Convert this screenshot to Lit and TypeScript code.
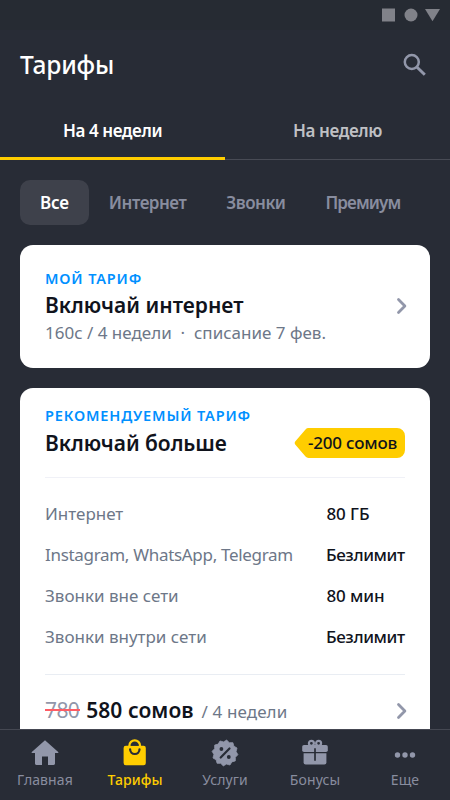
import { LitElement, html, css, svg } from "lit";
import { customElement, state } from "lit/decorators.js";
import { classMap } from "lit/directives/class-map.js";

const chevron = html`<svg class="chev" width="12" height="18" viewBox="0 0 12 18"><path d="M2.5 2.6L8.9 9l-6.4 6.4" fill="none" stroke="#9297aa" stroke-width="2.8" stroke-linecap="round" stroke-linejoin="round"/></svg>`;

const seal = Array.from({ length: 24 }, (_, i) => {
  const a = ((i - 0.5) * Math.PI) / 12;
  const r = i % 2 ? 13 : 11.2;
  return `${(14 + r * Math.sin(a)).toFixed(2)},${(14 - r * Math.cos(a)).toFixed(2)}`;
}).join(" ");

const icons: Record<string, unknown> = {
  home: svg`<path d="M14 1.2L27.2 13c.5.5.3 1-.4 1H24v10.6c0 .9-.5 1.4-1.4 1.4H17v-8.6h-6V26H5.4c-.9 0-1.4-.5-1.4-1.4V14H1.2c-.7 0-.9-.5-.4-1z" fill="currentColor"/>`,
  bag: svg`<path d="M8.4 8V6.6a5.3 5.3 0 0 1 10.6 0V8" fill="none" stroke="currentColor" stroke-width="2.2"/><rect x="2.6" y="6.7" width="22.2" height="19.5" rx="2.2" fill="currentColor"/><path d="M9.8 6.8a4 4 0 0 1 7.8 0z" fill="#282c36"/><path d="M9.1 10.3a4.7 4.7 0 0 0 9.4 0" fill="none" stroke="#282c36" stroke-width="2.2" stroke-linecap="round"/>`,
  percent: svg`<polygon points=${seal} fill="currentColor" stroke="currentColor" stroke-width=".8" stroke-linejoin="round"/><path d="M9.7 18.5l8.8-9" stroke="#282c36" stroke-width="2.2" stroke-linecap="round"/><circle cx="10.4" cy="10" r="1.9" fill="#282c36"/><circle cx="17.8" cy="18" r="1.9" fill="#282c36"/>`,
  gift: svg`<g fill="none" stroke="currentColor" stroke-width="2.2"><circle cx="10.4" cy="4.3" r="2.5"/><circle cx="17.6" cy="4.3" r="2.5"/></g><rect x="1.2" y="6" width="25.6" height="7" rx="1.8" fill="currentColor"/><path d="M2.6 14.3h22.8v9.2a2 2 0 0 1-2 2H4.6a2 2 0 0 1-2-2z" fill="currentColor"/><path d="M14 9.2v12.6" stroke="#282c36" stroke-width="1.7"/>`,
  more: svg`<g fill="currentColor"><circle cx="6.5" cy="16" r="2.7"/><circle cx="14" cy="16" r="2.7"/><circle cx="21.5" cy="16" r="2.7"/></g>`,
};

@customElement("app-root")
export class AppRoot extends LitElement {
  @state() private tab = 0;
  @state() private filter = 0;

  private filters = [
    ["Все", ""],
    ["Интернет", ""],
    ["Звонки", ""],
    ["Премиум", "tight"],
  ];
  private rows = [
    ["Интернет", "80 ГБ", "", "loose"],
    ["Instagram, WhatsApp, Telegram", "Безлимит", "long", ""],
    ["Звонки вне сети", "80 мин", "", "loose"],
    ["Звонки внутри сети", "Безлимит", "", ""],
  ];
  private nav = [
    ["home", "Главная"],
    ["bag", "Тарифы"],
    ["percent", "Услуги"],
    ["gift", "Бонусы"],
    ["more", "Еще"],
  ];

  static styles = css`
    :host { display: flex; flex-direction: column; height: 800px; overflow: hidden; background: #282c36; color: #10131c; font-family: "Noto Sans", "Open Sans", sans-serif; font-size: 17px; line-height: 24px; }
    * { box-sizing: border-box; }
    svg { display: block; flex: none; }
    .status { flex: none; height: 30px; background: #262b33; display: flex; justify-content: flex-end; align-items: center; padding-right: 10px; }
    .header { flex: none; height: 71px; display: flex; justify-content: space-between; align-items: center; padding: 0 23px 2px 20px; }
    .heading { margin: 0; font-size: 24.5px; font-weight: 550; letter-spacing: -0.2px; color: #fff; }
    .tabs { flex: none; display: flex; height: 59px; }
    .tab { flex: 1; display: flex; align-items: center; justify-content: center; padding-top: 2px; border-bottom: 1px solid #484b55; font-weight: 560; letter-spacing: -0.4px; color: #bfc0c4; cursor: pointer; }
    .tab.active { border-bottom: 3px solid #ffcd00; color: #fff; padding-top: 4px; }
    .chips { flex: none; display: flex; height: 45px; margin: 20px; }
    .chip { display: flex; align-items: center; padding: 0 20px; border-radius: 10px; font-weight: 560; letter-spacing: -0.5px; color: #888d9f; cursor: pointer; white-space: nowrap; }
    .chip.active { background: #3e414b; color: #fff; letter-spacing: -0.2px; }
    .chip.tight { letter-spacing: -0.9px; }
    .list { flex: 1; min-height: 0; overflow: hidden; padding: 0 20px; display: flex; flex-direction: column; gap: 20px; }
    .card { flex: none; background: #fff; border-radius: 13px; padding: 0 25px; }
    .mine { height: 122.5px; display: flex; justify-content: space-between; align-items: center; }
    .label { font-size: 14.5px; font-weight: 600; letter-spacing: 0.86px; line-height: 22px; color: #0090ff; }
    .title { font-size: 21px; font-weight: 600; line-height: 30px; letter-spacing: -0.06px; white-space: nowrap; }
    .info { color: #6d7788; line-height: 26px; white-space: pre; }
    .mine .title { padding-top: 1px; letter-spacing: 0; }
    .mine .chev { margin-right: -3px; }
    .offer { padding-top: 16.5px; height: 400px; }
    .offer .label { line-height: 23px; }
    .name { display: flex; justify-content: space-between; align-items: center; height: 32px; }
    .badge { position: relative; display: flex; align-items: center; justify-content: flex-end; width: 111px; height: 30px; padding-right: 8px; font-weight: 500; letter-spacing: -0.2px; white-space: nowrap; }
    .badge svg { position: absolute; inset: 0; }
    .badge span { position: relative; }
    .rows { margin-top: 18px; padding: 15px 0; height: 198px; border-top: 1.5px solid #f0f1f7; border-bottom: 1.5px solid #e9edf3; display: grid; grid-template-rows: repeat(4, 41.2px); }
    .row { display: grid; grid-template-columns: 1fr 79px; align-items: center; color: #6d7788; white-space: nowrap; }
    .row .long { letter-spacing: -0.31px; }
    .value { color: #10131c; font-weight: 550; letter-spacing: -0.4px; }
    .value.loose { letter-spacing: -0.1px; padding-left: 0.5px; }
    .price { display: flex; align-items: baseline; padding-top: 19.5px; line-height: 30px; }
    .old { font-size: 21px; letter-spacing: -0.6px; color: #9297aa; position: relative; margin-right: 7px; }
    .old::after { content: ""; position: absolute; left: 0; right: -1px; top: 14px; height: 2px; background: #ff5b64; }
    .period { margin-left: 8px; color: #6d7788; flex: 1; letter-spacing: 0.1px; }
    .price .title { letter-spacing: 0.04px; }
    .price .chev { align-self: center; margin-right: -3px; }
    .nav { flex: none; height: 71px; border-top: 1px solid #454852; display: flex; background: #282c36; }
    .item { flex: 1; display: flex; flex-direction: column; align-items: center; padding-top: 8.5px; font-size: 14px; line-height: 20px; letter-spacing: 0.1px; color: #888d9f; cursor: pointer; }
    .item span { margin-top: 3px; }
    .item svg { color: #9297aa; }
    .item.active, .item.active svg { color: #ffcd00; }
    .item.active { font-weight: 500; }
  `;

  render() {
    return html`
      <div class="status">
        <svg width="58" height="14" viewBox="0 0 58 14" fill="#808289"><path d="M0 .5h13v13H0z"/><circle cx="29" cy="7" r="6.5"/><path d="M43 1h15l-7.5 12.3z"/></svg>
      </div>
      <header class="header">
        <h1 class="heading">Тарифы</h1>
        <svg width="24" height="24" viewBox="0 0 24 24" fill="none" stroke="#9297aa"><circle cx="8.8" cy="9" r="7" stroke-width="2.5"/><path d="M13.8 14l8 7.8" stroke-width="3"/></svg>
      </header>
      <div class="tabs">
        ${["На 4 недели", "На неделю"].map((t, i) => html`<div class=${classMap({ tab: true, active: i === this.tab })} @click=${() => (this.tab = i)}>${t}</div>`)}
      </div>
      <div class="chips">
        ${this.filters.map(([t, c], i) => html`<div class="chip ${c} ${i === this.filter ? "active" : ""}" @click=${() => (this.filter = i)}>${t}</div>`)}
      </div>
      <main class="list">
        <section class="card mine">
          <div>
            <div class="label">МОЙ ТАРИФ</div>
            <div class="title">Включай интернет</div>
            <div class="info">160с / 4 недели  ·  списание 7 фев.</div>
          </div>
          ${chevron}
        </section>
        <section class="card offer">
          <div class="label">РЕКОМЕНДУЕМЫЙ ТАРИФ</div>
          <div class="name">
            <div class="title">Включай больше</div>
            <div class="badge">
              <svg width="111" height="30" viewBox="0 0 111 30"><path d="M14.5 0H103a8 8 0 0 1 8 8v14a8 8 0 0 1-8 8H14.500q-1.800 0-3-1.400L1.200 16.600q-1.200-1.600 0-3.200L11.500 1.400Q12.700 0 14.500 0z" fill="#ffcd00"/></svg>
              <span>-200 сомов</span>
            </div>
          </div>
          <div class="rows">
            ${this.rows.map(([k, v, c, d]) => html`<div class="row"><span class=${c}>${k}</span><span class="value ${d}">${v}</span></div>`)}
          </div>
          <div class="price">
            <span class="old">780</span><span class="title">580 сомов</span><span class="period">/ 4 недели</span>${chevron}
          </div>
        </section>
      </main>
      <nav class="nav">
        ${this.nav.map(([icon, t], i) => html`<div class=${classMap({ item: true, active: i === 1 })}><svg width="28" height="28" viewBox="0 0 28 28">${icons[icon]}</svg><span>${t}</span></div>`)}
      </nav>
    `;
  }
}
